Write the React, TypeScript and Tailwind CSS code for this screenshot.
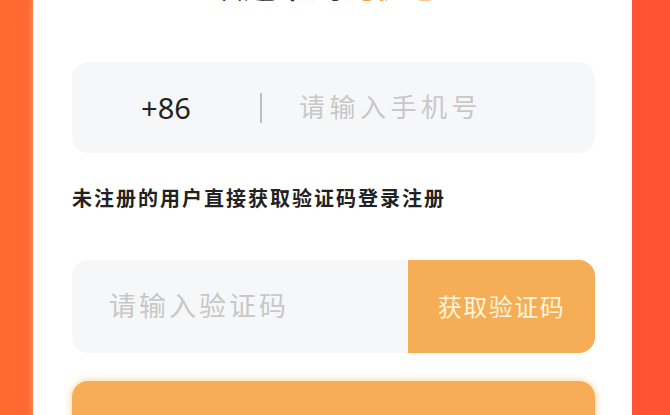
import React from "react";

const cjk = { fontFamily: '"Noto Sans", "Noto Sans CJK SC", sans-serif' };

export default function App() {
  return (
    <div className="flex h-[415px] w-[670px] overflow-hidden bg-[#ff5e32]" style={cjk}>
      <div className="w-[33px] shrink-0 bg-[#ff6a33]" />
      <div className="flex w-[599px] shrink-0 flex-col overflow-hidden bg-white pl-[39px] pr-[37px] shadow-[0_0_6px_rgba(255,180,150,0.7)]">
        <div className="-mt-[32px] flex h-[36px] shrink-0 justify-center pr-[16px] text-[33px] leading-[36px] font-medium">
          <span className="text-[#333]">欢迎来到</span>
          <span className="text-[#f5a04a]">淘优惠</span>
        </div>

        <div className="mt-[58px] flex h-[91px] shrink-0 items-center rounded-[16px] bg-[#f6f7f9]">
          <div className="w-[188px] text-center text-[29px] text-[#222]">+86</div>
          <div className="h-[30px] w-[2px] bg-[#bdbdbd]" />
          <div className="ml-[37px] text-[26px] tracking-[4.5px] text-[#c8c8c8]">请输入手机号</div>
        </div>

        <div className="mt-[32px] shrink-0 text-[20px] leading-[28px] tracking-[2px] font-bold text-[#222]">
          未注册的用户直接获取验证码登录注册
        </div>

        <div className="mt-[47px] flex h-[93px] shrink-0">
          <div className="flex flex-1 items-center rounded-l-[16px] bg-[#f6f7f9] pl-[37px] text-[27px] tracking-[3px] text-[#c8c8c8]">
            请输入验证码
          </div>
          <div className="flex w-[187px] items-center justify-center rounded-r-[16px] bg-[#f5ae56] text-[24px] tracking-[1.5px] text-[#fff4dc]">
            获取验证码
          </div>
        </div>

        <div className="mt-[28px] h-[93px] shrink-0 rounded-[16px] bg-[#f6ad55] shadow-[0_0_8px_rgba(245,174,85,0.6)]" />
      </div>
      <div className="flex-1 bg-[#ff5331]" />
    </div>
  );
}
